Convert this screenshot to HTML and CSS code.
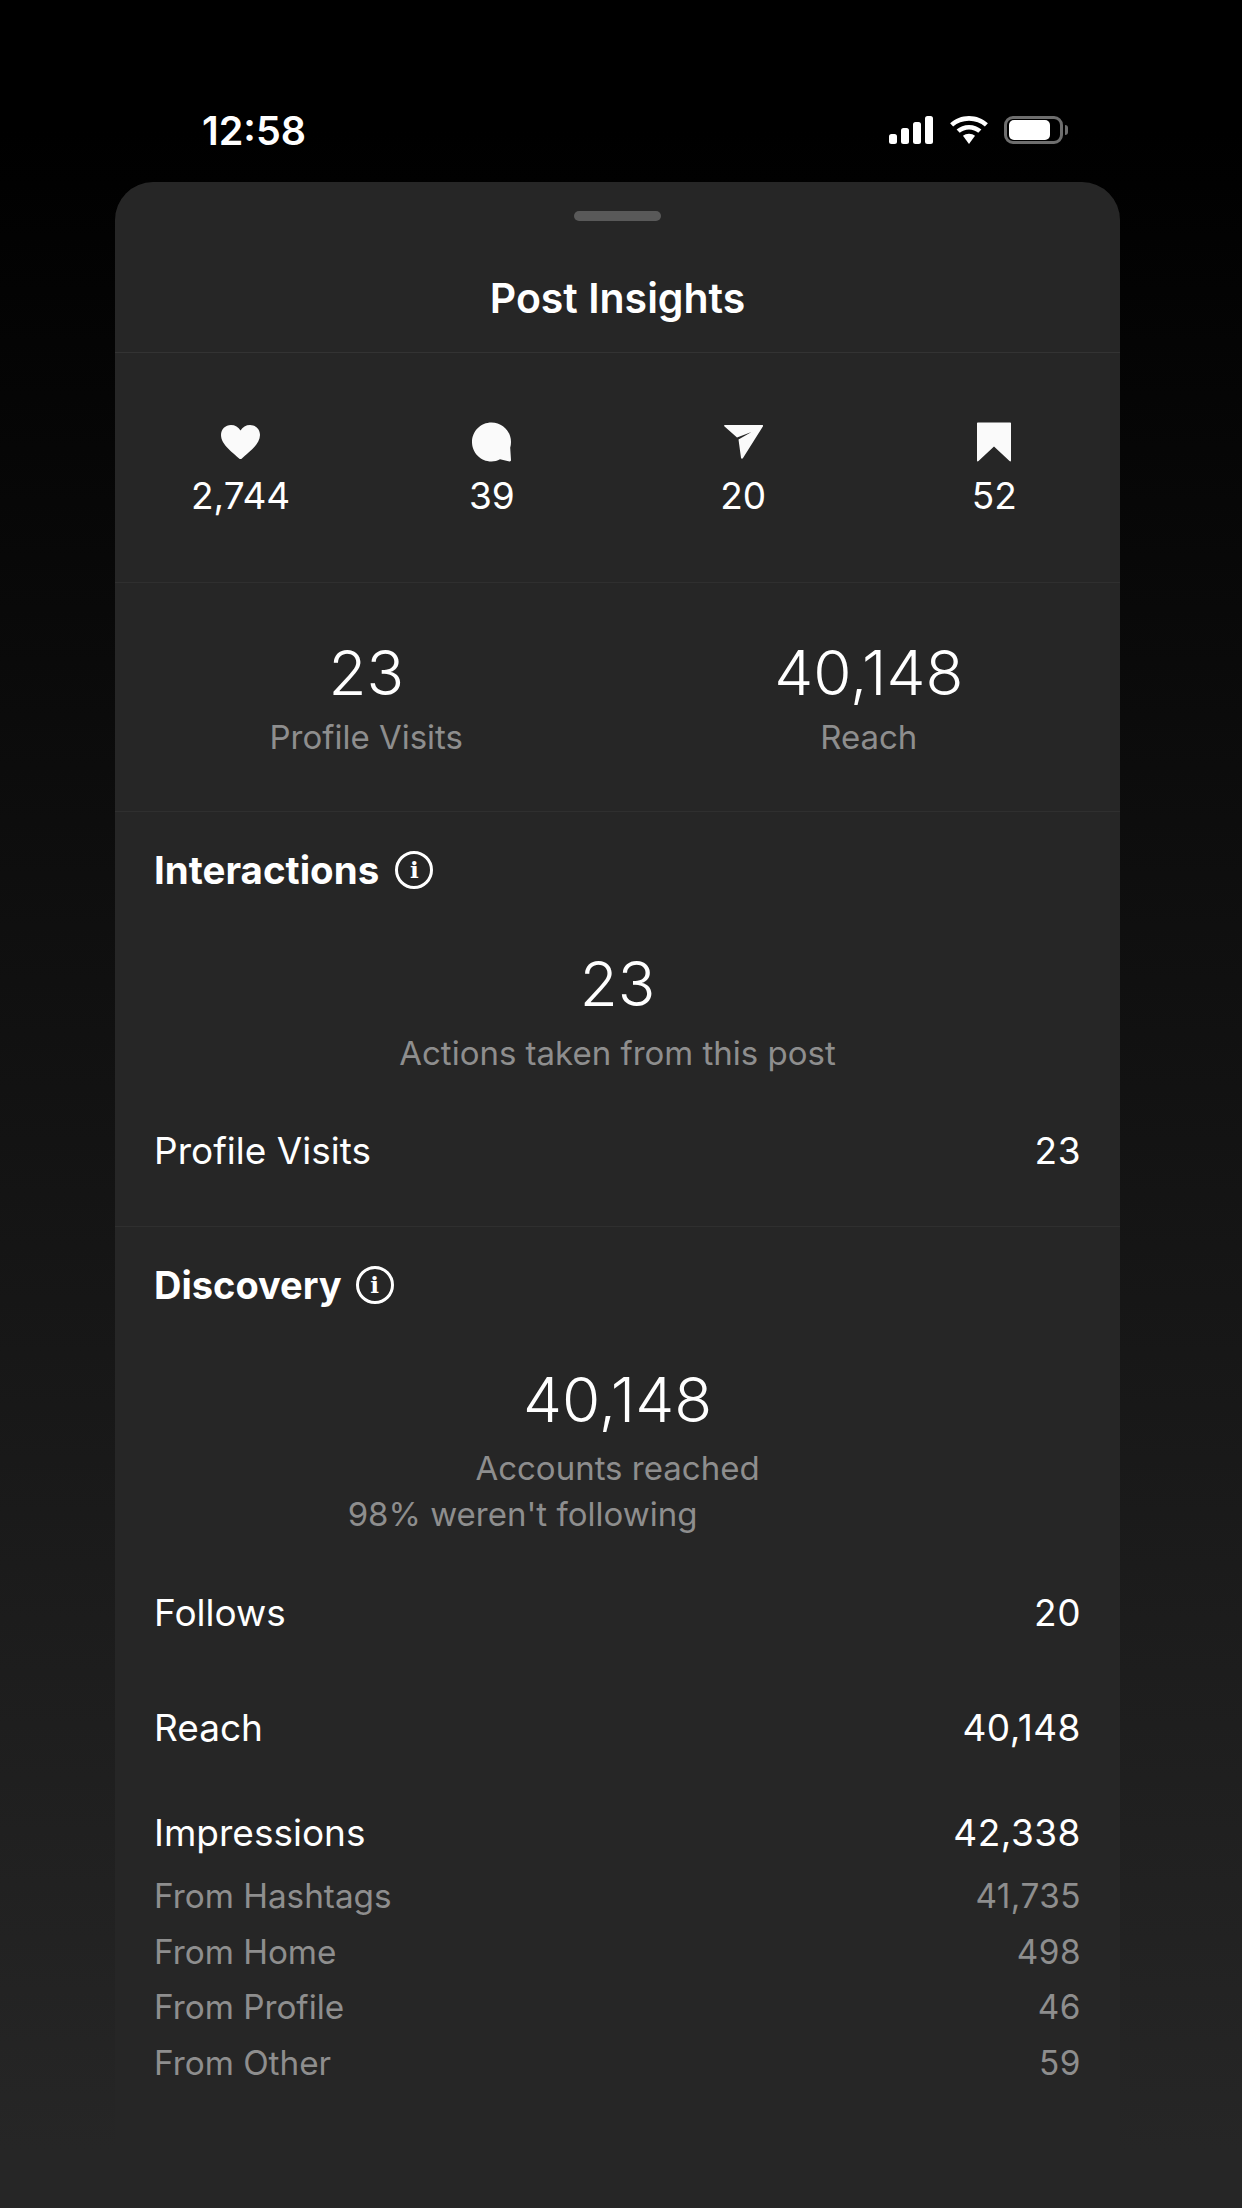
FILE: index.html
```html
<!DOCTYPE html>
<html lang="en">
<head>
    <meta charset="UTF-8">
    <meta name="viewport" content="width=device-width, initial-scale=1.0">
    <title>Post Insights</title>
    <link rel="stylesheet" href="styles.css">
</head>
<body>
    <div class="status-bar">
        <div class="clock">12:58</div>
        <div class="status-icons">
            <svg class="signal" viewBox="0 0 45 28" width="45" height="28">
                <rect x="0" y="18" width="8" height="10" rx="2.5"/>
                <rect x="12" y="12" width="8" height="16" rx="2.5"/>
                <rect x="24" y="6" width="8" height="22" rx="2.5"/>
                <rect x="36" y="0" width="8" height="28" rx="2.5"/>
            </svg>
            <svg class="wifi" viewBox="2 0 34 27" width="38" height="28" preserveAspectRatio="none">
                <path d="M19 4.500c5.500 0 10.500 2.100 14.200 5.600l2.700-3.100C31.400 2.700 25.500 0 19 0S6.600 2.700 2.100 7l2.700 3.100C8.500 6.600 13.500 4.500 19 4.500z"/>
                <path d="M19 13c3.200 0 6.100 1.200 8.300 3.200l2.800-3.200C27.200 10.300 23.300 8.600 19 8.600s-8.200 1.700-11.100 4.400l2.800 3.200C12.900 14.200 15.800 13 19 13z"/>
                <path d="M19 17c-2.100 0-4 .8-5.400 2.100L19 27l5.400-7.900C23 17.800 21.100 17 19 17z"/>
            </svg>
            <div class="battery">
                <div class="battery-fill"></div>
            </div>
        </div>
    </div>

    <div class="sheet">
        <div class="sheet-top">
            <div class="grabber"></div>
            <div class="title">Post Insights</div>
        </div>

        <div class="stats">
            <div class="stat">
                <svg class="stat-icon" viewBox="0 0 39 34" width="39" height="34">
                    <path d="M19.500 34c-.5 0-1-.2-1.400-.6C13 28.500 0 20 0 10 0 4.300 4.400 0 10 0c4 0 7.500 2 9.500 5.500C21.500 2 25 0 29 0c5.600 0 10 4.300 10 10 0 10-13 18.500-18.100 23.400-.4.4-.9.6-1.400.6z"/>
                </svg>
                <div class="stat-value">2,744</div>
            </div>
            <div class="stat">
                <svg class="stat-icon" viewBox="0 0 39 39" width="39" height="39">
                    <path d="M19.500 0C30.300 0 39 8.700 39 19.500c0 2-.3 4-.8 5.800L39 37.500c.1 1-.6 1.600-1.500 1.400L28 36.800c-2.600 1.400-5.500 2.200-8.500 2.200C8.700 39 0 30.300 0 19.500S8.700 0 19.500 0z"/>
                </svg>
                <div class="stat-value">39</div>
            </div>
            <div class="stat">
                <svg class="stat-icon" viewBox="0 0 39 34" width="39" height="34">
                    <path d="M.8 0H38.200c.8 0 1 .6.8 1.200L19 33c-.5 1.200-1.800 1-2-.2L14.500 14.500 27.500 7 13 12.500.3 1.200C-.2.600.2 0 .8 0z"/>
                </svg>
                <div class="stat-value">20</div>
            </div>
            <div class="stat">
                <svg class="stat-icon" viewBox="0 0 34 39" width="34" height="39">
                    <path d="M1 0h32c.6 0 1 .4 1 1v37c0 1-.8 1.200-1.500.6L17 24 1.500 38.600C.8 39.200 0 39 0 38V1C0 .4.4 0 1 0z"/>
                </svg>
                <div class="stat-value">52</div>
            </div>
        </div>

        <div class="totals">
            <div class="total">
                <div class="big-number">23</div>
                <div class="muted-label">Profile Visits</div>
            </div>
            <div class="total">
                <div class="big-number">40,148</div>
                <div class="muted-label">Reach</div>
            </div>
        </div>

        <div class="section interactions">
            <div class="section-title">
                Interactions
                <span class="info-icon">i</span>
            </div>
            <div class="summary">
                <div class="big-number">23</div>
                <div class="muted-label">Actions taken from this post</div>
            </div>
            <div class="row row-visits">
                <span>Profile Visits</span>
                <span>23</span>
            </div>
        </div>

        <div class="section discovery">
            <div class="section-title">
                Discovery
                <span class="info-icon">i</span>
            </div>
            <div class="summary">
                <div class="big-number">40,148</div>
                <div class="muted-label">Accounts reached</div>
                <div class="following">98% weren't following</div>
            </div>
            <div class="row row-follows">
                <span>Follows</span>
                <span>20</span>
            </div>
            <div class="row row-reach">
                <span>Reach</span>
                <span>40,148</span>
            </div>
            <div class="row row-impressions">
                <span>Impressions</span>
                <span>42,338</span>
            </div>
            <div class="sub-rows">
                <div class="sub-row"><span>From Hashtags</span><span>41,735</span></div>
                <div class="sub-row"><span>From Home</span><span>498</span></div>
                <div class="sub-row"><span>From Profile</span><span>46</span></div>
                <div class="sub-row"><span>From Other</span><span>59</span></div>
            </div>
        </div>
    </div>
</body>
</html>
```

FILE: styles.css
```css
body {
    margin: 0;
    height: 2208px;
    overflow: hidden;
    font-family: Inter, "Liberation Sans", sans-serif;
    background: linear-gradient(to bottom, #000000 130px, #262626 2150px);
    color: #ffffff;
}

.status-bar {
    height: 182px;
    margin: 0 122px 0 115px;
    padding: 0 52px 0 87px;
    box-sizing: border-box;
    display: flex;
    justify-content: space-between;
    align-items: flex-start;
}

.clock {
    margin-top: 107px;
    font-size: 39.500px;
    line-height: 48px;
    font-weight: 600;
}

.status-icons {
    margin-top: 116px;
    display: flex;
    align-items: center;
    gap: 16px;
    fill: #ffffff;
}

.battery {
    position: relative;
    width: 59px;
    height: 28px;
    border: 3px solid #6e6e6e;
    border-radius: 9px;
    padding: 1px 2px;
    box-sizing: border-box;
    margin-right: 5px;
}

.battery::after {
    content: "";
    position: absolute;
    right: -8px;
    top: 6px;
    width: 3px;
    height: 10px;
    background-color: #6e6e6e;
    border-radius: 0 3px 3px 0;
}

.battery-fill {
    width: 41px;
    height: 20px;
    background-color: #ffffff;
    border-radius: 5px;
}

.sheet {
    margin: 0 122px 0 115px;
    height: 2026px;
    border-radius: 38px 38px 0 0;
    background-color: #262626;
}

.sheet-top {
    height: 171px;
    border-bottom: 1px solid #333333;
    text-align: center;
    box-sizing: border-box;
    padding-top: 29px;
}

.grabber {
    width: 87px;
    height: 10px;
    margin: 0 auto;
    border-radius: 5px;
    background-color: #595959;
}

.title {
    margin-top: 47px;
    font-size: 41px;
    line-height: 60px;
    font-weight: 600;
}

.stats {
    height: 230px;
    box-sizing: border-box;
    padding-top: 68px;
    border-bottom: 1px solid #2f2f2f;
    display: grid;
    grid-template-columns: repeat(4, 1fr);
}

.stat {
    display: flex;
    flex-direction: column;
    align-items: center;
}

.stat-icon {
    fill: #fafafa;
    height: 42px;
    flex-shrink: 0;
}

.stat-value {
    margin-top: 11px;
    font-size: 37px;
    line-height: 44px;
}

.totals {
    height: 229px;
    box-sizing: border-box;
    padding-top: 53px;
    border-bottom: 1px solid #2f2f2f;
    display: grid;
    grid-template-columns: 1fr 1fr;
    text-align: center;
}

.big-number {
    font-size: 62px;
    line-height: 74px;
    font-weight: 300;
}

.muted-label,
.following {
    font-size: 33px;
    line-height: 46px;
    color: #8e8e8e;
}

.totals .muted-label {
    margin-top: 4px;
}

.section {
    padding: 0 39px;
    box-sizing: border-box;
}

.interactions {
    height: 415px;
    border-bottom: 1px solid #2f2f2f;
}

.section-title {
    padding-top: 34px;
    font-size: 38.500px;
    line-height: 48px;
    font-weight: 700;
    display: flex;
    align-items: center;
    gap: 16px;
}

.discovery .section-title {
    font-size: 38px;
    gap: 14px;
}

.info-icon {
    width: 32px;
    height: 32px;
    border: 3px solid #ffffff;
    border-radius: 50%;
    font-family: "DejaVu Serif", serif;
    font-size: 23px;
    line-height: 32px;
    font-weight: 700;
    text-align: center;
}

.interactions .summary {
    padding-top: 53px;
    text-align: center;
}

.interactions .muted-label {
    margin-top: 9px;
}

.discovery .summary {
    padding-top: 54px;
    text-align: center;
}

.discovery .muted-label {
    margin-top: 8px;
}

.following {
    padding-right: 190px;
}

.row {
    display: flex;
    justify-content: space-between;
    font-size: 37px;
    line-height: 46px;
}

.row span:last-child,
.sub-row span:last-child {
    letter-spacing: 0.5px;
}

.row-visits {
    margin-top: 52px;
}

.row-follows {
    margin-top: 53px;
}

.row-reach {
    margin-top: 69px;
}

.row-impressions {
    margin-top: 59px;
}

.sub-rows {
    margin-top: 13px;
}

.sub-row {
    display: flex;
    justify-content: space-between;
    font-size: 33.300px;
    line-height: 55.700px;
    color: #8e8e8e;
}
```
